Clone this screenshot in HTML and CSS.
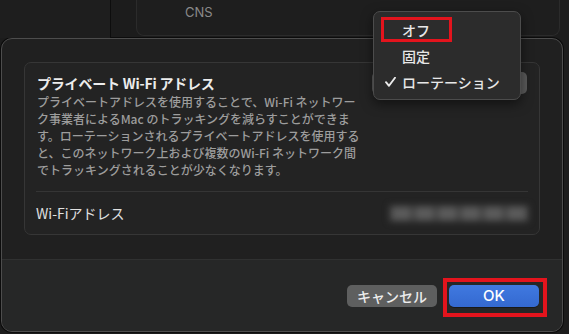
FILE: index.html
```html
<!DOCTYPE html>
<html lang="ja">
<head>
<meta charset="utf-8">
<link rel="stylesheet" href="styles.css">
</head>
<body>
<div class="backdrop">
  <div class="sidebar"></div>
  <div class="card"><span class="cns">CNS</span></div>
</div>
<div class="dialog">
  <div class="dialog-body">
    <div class="group">
      <div class="row top-row">
        <div class="info">
          <div class="title">プライベート Wi-Fi アドレス</div>
          <p class="desc">プライベートアドレスを使用することで、Wi-Fi ネットワー<br>ク事業者によるMac のトラッキングを減らすことができま<br>す。ローテーションされるプライベートアドレスを使用する<br>と、このネットワーク上および複数のWi-Fi ネットワーク間<br>でトラッキングされることが少なくなります。</p>
        </div>
        <div class="popup"></div>
      </div>
      <div class="sep"></div>
      <div class="row addr-row">
        <span class="addr-label">Wi-Fiアドレス</span>
        <div class="blur"><span></span><span></span><span></span><span></span><span></span><span></span></div>
      </div>
    </div>
  </div>
  <div class="footer">
    <button class="btn cancel">キャンセル</button>
    <span class="hl-ok"><button class="btn ok">OK</button></span>
  </div>
</div>
<div class="menu">
  <div class="item first"><span class="check"></span><span class="label">オフ</span><span class="mark"></span></div>
  <div class="item"><span class="check"></span><span class="label">固定</span></div>
  <div class="item"><span class="check"><svg width="11" height="10" viewBox="0 0 11 10"><path d="M1 5.2 L4 8.8 L10 0.8" fill="none" stroke="#ececec" stroke-width="1.9" stroke-linecap="round" stroke-linejoin="round"/></svg></span><span class="label">ローテーション</span></div>
</div>
</body>
</html>
```
FILE: styles.css
```css
* { box-sizing: border-box; }
html, body {
  margin: 0;
  padding: 0;
}
body {
  width: 569px;
  height: 334px;
  overflow: hidden;
  background: #1c1c1c;
  font-family: "Noto Sans CJK JP", "Noto Sans", sans-serif;
  position: relative;
}
.backdrop {
  display: flex;
  height: 38px;
}
.sidebar {
  width: 111px;
  border-right: 1px solid #0d0d0d;
  background: #1e1e1e;
}
.card {
  margin-left: 25px;
  width: 424px;
  height: 36px;
  border: 1px solid #2b2b2b;
  border-top: none;
  border-radius: 0 0 8px 8px;
  background: #1e1e1e;
  padding-left: 48px;
}
.cns {
  display: block;
  color: #8a8a8a;
  font-size: 13px;
  line-height: 24px;
  font-family: "Inter", "Noto Sans", sans-serif;
}
.dialog {
  margin-left: 1px;
  width: 562px;
  height: 294px;
  border: 1px solid #4d4d4d;
  border-radius: 11px;
  box-shadow: 0 0 0 1px #0c0c0c;
  background: #202020;
  overflow: hidden;
  display: flex;
  flex-direction: column;
}
.dialog-body {
  height: 220px;
  padding: 23px 0 0 22px;
}
.group {
  width: 516px;
  height: 173px;
  border: 1px solid #363636;
  border-radius: 7px;
  background: #232323;
}
.row { display: flex; }
.top-row {
  height: 128px;
  padding: 11px 12px 0 12px;
}
.info { width: 330px; }
.title {
  color: #ececec;
  font-size: 14px;
  line-height: 18px;
  font-weight: 700;
  letter-spacing: -0.2px;
}
.desc {
  margin: 1px 0 0 0;
  color: #9d9d9d;
  font-size: 12px;
  line-height: 17px;
  white-space: nowrap;
  font-weight: 500;
}
.popup {
  margin-left: auto;
  margin-top: -2px;
  width: 155px;
  height: 22px;
  border-radius: 5px;
  background: #5b5b5b;
}
.sep {
  height: 1px;
  margin: 0 11px;
  background: #353535;
}
.addr-row {
  height: 42px;
  align-items: center;
  padding: 0 10px 0 11px;
  justify-content: space-between;
}
.addr-label {
  color: #e0e0e0;
  font-size: 14px;
  line-height: 18px;
}
.blur {
  width: 140px;
  height: 17px;
  display: flex;
  gap: 4px;
  align-items: center;
  padding: 0 3px;
  background: #3f3f3f;
  filter: blur(3px);
}
.blur span {
  flex: 1;
  height: 13px;
  background: #5a5a5a;
  border-radius: 4px;
}
.footer {
  flex: 1;
  background: #262727;
  border-top: 1px solid #303131;
  display: flex;
  justify-content: flex-end;
  align-items: flex-start;
  padding-right: 15px;
}
.btn {
  border: none;
  font-family: "Noto Sans CJK JP", "Noto Sans", sans-serif;
  font-size: 14px;
  line-height: 22px;
  height: 22px;
  width: 90px;
  border-radius: 5px;
  padding: 0;
  color: #f0f0f0;
  font-weight: 500;
}
.cancel {
  margin-top: 25px;
  background: #5e5f5f;
  color: #ececec;
}
.hl-ok {
  margin-left: 6px;
  margin-top: 18px;
  display: block;
  border: 4px solid #e3141d;
  padding: 3px 4px 6px 2px;
}
.ok {
  display: block;
  background: linear-gradient(#4079e0, #3469d0);
  color: #ffffff;
  font-family: "Inter", "Noto Sans", sans-serif;
  font-size: 15px;
  box-shadow: 0 1px 0 rgba(0,0,0,0.35);
}
.menu {
  position: absolute;
  left: 373px;
  top: 11px;
  width: 148px;
  height: 89px;
  background: #2c2c2c;
  border: 1px solid #4c4c4c;
  border-radius: 7px;
  box-shadow: 0 4px 12px rgba(0,0,0,0.5);
  padding-top: 5px;
}
.item {
  position: relative;
  display: flex;
  align-items: center;
  height: 26px;
  padding-left: 11px;
}
.check {
  width: 17px;
  display: flex;
  align-items: center;
}
.label {
  color: #e8e8e8;
  font-size: 14px;
  line-height: 18px;
  font-weight: 500;
}
.mark {
  position: absolute;
  left: 7px;
  top: 0;
  width: 71px;
  height: 25px;
  border: 3px solid #e3141d;
}
```
